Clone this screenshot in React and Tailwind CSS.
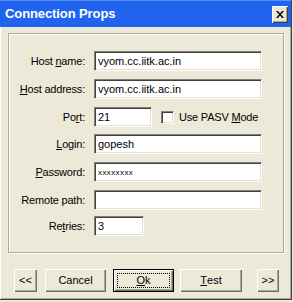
import React from 'react';

const font = { fontFamily: '"Liberation Sans", Arial, sans-serif' };

function Field({ label, children, className = '' }) {
  return (
    <div className={`flex items-center h-[20px] ${className}`}>
      <div className="w-[76px] text-right text-[11px] tracking-[-0.2px] text-black leading-none">{label}</div>
      <div className="ml-[9px] flex items-center">{children}</div>
    </div>
  );
}

function Edit({ value = '', width = 'w-[168px]', small = false }) {
  return (
    <div
      className={`${width} h-[20px] bg-white border border-t-[#808080] border-l-[#808080] border-b-white border-r-white shadow-[inset_1px_1px_0_#404040,inset_-1px_-1px_0_#e4e1d0] flex items-center pl-[3px] text-black leading-none ${small ? 'text-[8px] pt-[1px] tracking-[0.4px]' : 'text-[11px]'}`}
    >
      {value}
    </div>
  );
}

function Btn({ children, width, isDefault = false }) {
  return (
    <div
      className={`${width} h-[23px] flex items-center justify-center text-[11px] text-black leading-none bg-[#ECE9D8] ${
        isDefault
          ? 'border border-black shadow-[inset_1px_1px_0_#fff,inset_-1px_-1px_0_#716F64,inset_-2px_-2px_0_#ACA899]'
          : 'shadow-[inset_1px_1px_0_#fff,inset_-1px_-1px_0_#716F64,inset_-2px_-2px_0_#ACA899]'
      }`}
    >
      {isDefault ? (
        <div className="w-[53px] h-[15px] border border-dotted border-black flex items-center justify-center">{children}</div>
      ) : (
        children
      )}
    </div>
  );
}

export default function App() {
  return (
    <div className="w-[293px] h-[302px] bg-[#ECE9D8] overflow-hidden" style={font}>
      <div className="w-[292px] h-[300px] flex flex-col border-r border-b border-[#404040] shadow-[inset_1px_1px_0_#fff,inset_-1px_-1px_0_#ACA899]">
        {/* Title bar */}
        <div className="h-[27px] bg-[#1F63EF] flex items-center justify-between pl-[5px] pr-[3px] border-t border-[#5b8ff5]">
          <span className="text-white font-bold text-[13px] tracking-[-0.1px]">Connection Props</span>
          <div className="w-[16px] h-[17px] bg-[#ECE9D8] flex items-center justify-center shadow-[inset_1px_1px_0_#fff,inset_-1px_-1px_0_#404040,inset_-2px_-2px_0_#ACA899]">
            <svg width="8" height="7" viewBox="0 0 8 7">
              <path d="M0 0h2l2 2.5L6 0h2L5 3.5 8 7H6L4 4.5 2 7H0l3-3.5z" fill="#000" />
            </svg>
          </div>
        </div>

        {/* Group box */}
        <div className="mt-[6px] ml-[8px] w-[276px] h-[220px] border border-[#ACA899] shadow-[inset_1px_1px_0_#fff,1px_1px_0_#fff] pt-[17px]">
          <Field label={<>Host <u>n</u>ame:</>}>
            <Edit value="vyom.cc.iitk.ac.in" />
          </Field>
          <Field className="mt-[8px]" label={<><u>H</u>ost address:</>}>
            <Edit value="vyom.cc.iitk.ac.in" />
          </Field>
          <Field className="mt-[8px]" label={<>Po<u>r</u>t:</>}>
            <Edit value="21" width="w-[58px]" />
            <div className="ml-[9px] w-[13px] h-[13px] bg-white border border-t-[#808080] border-l-[#808080] border-b-white border-r-white shadow-[inset_1px_1px_0_#404040,inset_-1px_-1px_0_#e4e1d0]" />
            <span className="ml-[5px] text-[11px] tracking-[-0.2px] text-black leading-none">Use PASV <u>M</u>ode</span>
          </Field>
          <Field className="mt-[7px]" label={<><u>L</u>ogin:</>}>
            <Edit value="gopesh" />
          </Field>
          <Field className="mt-[8px]" label={<><u>P</u>assword:</>}>
            <Edit value="xxxxxxxx" small />
          </Field>
          <Field className="mt-[8px]" label="Remote path:">
            <Edit />
          </Field>
          <Field className="mt-[6px]" label={<>Re<u>t</u>ries:</>}>
            <Edit value="3" width="w-[50px]" />
          </Field>
        </div>

        {/* Buttons */}
        <div className="mt-[16px] flex items-center pl-[14px]">
          <Btn width="w-[23px]">&lt;&lt;</Btn>
          <div className="ml-[8px]"><Btn width="w-[61px]">Cancel</Btn></div>
          <div className="ml-[7px]"><Btn width="w-[61px]" isDefault><u>O</u>k</Btn></div>
          <div className="ml-[6px]"><Btn width="w-[62px]"><u>T</u>est</Btn></div>
          <div className="ml-[15px]"><Btn width="w-[22px]">&gt;&gt;</Btn></div>
        </div>
      </div>
    </div>
  );
}
